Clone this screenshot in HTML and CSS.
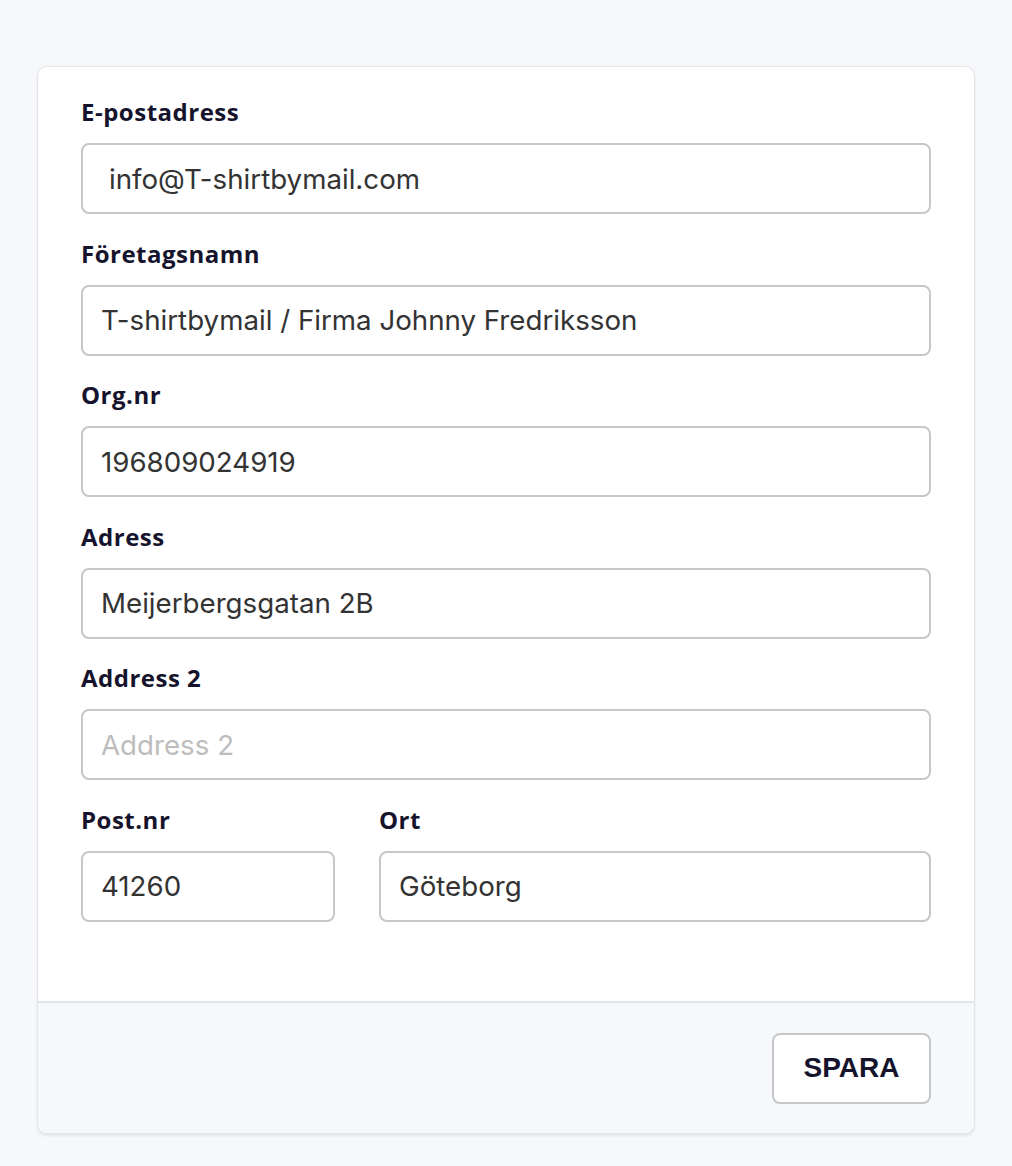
FILE: index.html
```html
<!DOCTYPE html>
<html lang="sv">
<head>
  <meta charset="UTF-8" />
  <title>Företagsuppgifter</title>
  <link rel="stylesheet" href="styles.css">
</head>
<body>
  <form class="card" id="companyForm">
    <div class="card-body">
      <div class="field">
        <label for="email">E-postadress</label>
        <input type="text" id="email" class="indent" value="info@T-shirtbymail.com" />
      </div>
      <div class="field">
        <label for="company">Företagsnamn</label>
        <input type="text" id="company" value="T-shirtbymail / Firma Johnny Fredriksson" />
      </div>
      <div class="field">
        <label for="orgnr">Org.nr</label>
        <input type="text" id="orgnr" value="196809024919" />
      </div>
      <div class="field">
        <label for="address">Adress</label>
        <input type="text" id="address" value="Meijerbergsgatan 2B" />
      </div>
      <div class="field">
        <label for="address2">Address 2</label>
        <input type="text" id="address2" placeholder="Address 2" />
      </div>
      <div class="row">
        <div class="field">
          <label for="zip">Post.nr</label>
          <input type="text" id="zip" value="41260" />
        </div>
        <div class="field">
          <label for="city">Ort</label>
          <input type="text" id="city" value="Göteborg" />
        </div>
      </div>
    </div>
    <div class="card-footer">
      <button type="submit">SPARA</button>
    </div>
  </form>
</body>
</html>
```

FILE: styles.css
```css
body {
  margin: 0;
  padding: 66px 37px;
  background-color: #f7f8fa;
  font-family: Inter, "Open Sans", sans-serif;
}
.card {
  background-color: #fff;
  border: 1px solid #e3e5e9;
  border-radius: 10px;
  box-shadow: 0 2px 3px rgba(0, 0, 0, 0.08);
  overflow: hidden;
}
.card-body {
  display: flex;
  flex-direction: column;
  gap: 24.6px;
  padding: 30px 43px 79px;
}
.field {
  display: flex;
  flex-direction: column;
}
label {
  font-family: "Open Sans", sans-serif;
  font-weight: 700;
  font-size: 24px;
  letter-spacing: 0.5px;
  line-height: 30px;
  color: #15142c;
  margin-bottom: 16px;
}
input {
  box-sizing: border-box;
  height: 71px;
  padding: 0 18px;
  border: 2px solid #c6c7ca;
  border-radius: 8px;
  font-family: Inter, sans-serif;
  font-size: 27.7px;
  color: #333;
  background: #fff;
}
input.indent {
  padding-left: 26px;
}
input::placeholder {
  color: #bdbdbd;
}
.row {
  display: grid;
  grid-template-columns: 254px 1fr;
  gap: 44px;
}
.card-footer {
  display: flex;
  justify-content: flex-end;
  padding: 30px 43px 29px;
  background-color: #f7f8fa;
  border-top: 2px solid #e3e5e9;
}
button {
  width: 159px;
  height: 71px;
  background: #fff;
  border: 2px solid #c6c7ca;
  border-radius: 8px;
  font-family: "Liberation Sans", Arial, sans-serif;
  font-weight: 700;
  font-size: 28px;
  color: #15142c;
  cursor: pointer;
}
```
